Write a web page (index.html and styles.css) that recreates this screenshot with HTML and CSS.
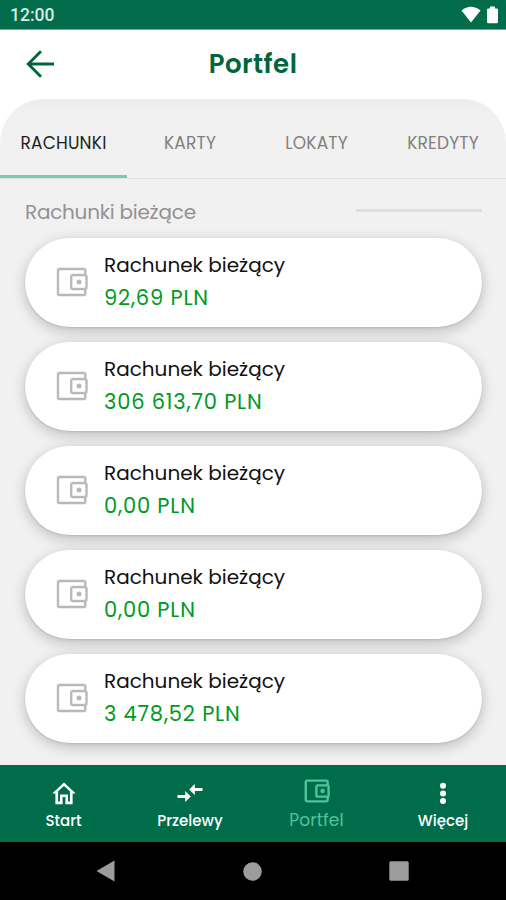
FILE: index.html
```html
<!DOCTYPE html>
<html lang="pl">
<head>
    <meta charset="UTF-8">
    <meta name="viewport" content="width=device-width, initial-scale=1.0">
    <title>Portfel</title>
    <link rel="stylesheet" href="styles.css">
</head>
<body>

    <svg class="sprite" aria-hidden="true">
        <symbol id="wallet" viewBox="0 0 32 30">
            <path d="M29.3 7.5V3.6Q29.3 2 27.7 2H3.6Q2 2 2 3.6V26.4Q2 28 3.6 28H27.7Q29.3 28 29.3 26.4V22.5"/>
            <rect x="15.2" y="8" width="15.3" height="14" rx="1.8"/>
            <circle cx="23" cy="15" r="1.3"/>
        </symbol>
    </svg>

    <div class="phone">
        <div class="status-bar">
            <span class="clock">12:00</span>
            <div class="status-icons">
                <svg width="20" height="18" viewBox="0 0 20 18"><path d="M0.5 4.5Q10 -3 19.5 4.5L10 16.5Z"/></svg>
                <svg width="11" height="18" viewBox="0 0 11 18"><path d="M3 0.5H8V2.5H9.8Q11 2.5 11 3.7V16Q11 17.2 9.8 17.2H1.2Q0 17.2 0 16V3.7Q0 2.5 1.2 2.5H3Z"/></svg>
            </div>
        </div>

        <header class="header">
            <svg class="back" viewBox="0 0 28 28"><path d="M28 14H2M15 1.2L2.2 14L15 26.8"/></svg>
            <h1>Portfel</h1>
        </header>

        <main class="content">
            <nav class="tabs">
                <a class="tab active">RACHUNKI</a>
                <a class="tab">KARTY</a>
                <a class="tab">LOKATY</a>
                <a class="tab">KREDYTY</a>
            </nav>

            <div class="section-title">
                <h2>Rachunki bieżące</h2>
                <span class="line"></span>
            </div>

            <div class="accounts">
                <div class="account">
                    <svg class="wallet"><use href="#wallet"/></svg>
                    <div>
                        <p class="name">Rachunek bieżący</p>
                        <p class="amount">92,69 PLN</p>
                    </div>
                </div>
                <div class="account">
                    <svg class="wallet"><use href="#wallet"/></svg>
                    <div>
                        <p class="name">Rachunek bieżący</p>
                        <p class="amount">306 613,70 PLN</p>
                    </div>
                </div>
                <div class="account">
                    <svg class="wallet"><use href="#wallet"/></svg>
                    <div>
                        <p class="name">Rachunek bieżący</p>
                        <p class="amount">0,00 PLN</p>
                    </div>
                </div>
                <div class="account">
                    <svg class="wallet"><use href="#wallet"/></svg>
                    <div>
                        <p class="name">Rachunek bieżący</p>
                        <p class="amount">0,00 PLN</p>
                    </div>
                </div>
                <div class="account">
                    <svg class="wallet"><use href="#wallet"/></svg>
                    <div>
                        <p class="name">Rachunek bieżący</p>
                        <p class="amount">3 478,52 PLN</p>
                    </div>
                </div>
            </div>
        </main>

        <nav class="bottom-nav">
            <a class="nav-item">
                <svg width="24" height="23" viewBox="0 0 24 23"><path class="fill" fill-rule="evenodd" d="M12 0.6L0.2 11.6H3.4V22.2H10.6V15H13.4V22.2H20.6V11.6H23.8ZM12 4L17.9 9.3V19.6H16V12.6H8V19.6H6.1V9.3Z"/></svg>
                <span>Start</span>
            </a>
            <a class="nav-item">
                <svg width="26" height="23" viewBox="0 0 26 23"><path class="fill" d="M25.5 5.9H17.8V2.1L12.2 7.5L17.8 12.9V9.1H25.5ZM0.5 12.9H8.2V9.1L13.8 14.5L8.2 19.9V16.1H0.5Z"/></svg>
                <span>Przelewy</span>
            </a>
            <a class="nav-item active">
                <svg class="wallet" width="26" height="24"><use href="#wallet"/></svg>
                <span>Portfel</span>
            </a>
            <a class="nav-item">
                <svg width="8" height="23" viewBox="0 0 8 23"><g class="fill"><circle cx="4" cy="3.8" r="3"/><circle cx="4" cy="11.4" r="3"/><circle cx="4" cy="19" r="3"/></g></svg>
                <span>Więcej</span>
            </a>
        </nav>

        <div class="system-bar">
            <svg width="19" height="22" viewBox="0 0 19 22"><path d="M18.5 0.5V21.5L0.5 11Z"/></svg>
            <svg width="19" height="19" viewBox="0 0 19 19"><circle cx="9.5" cy="9.5" r="9.3"/></svg>
            <svg width="20" height="20" viewBox="0 0 20 20"><rect x="0.3" y="0.3" width="19.4" height="19.4" rx="1.5"/></svg>
        </div>
    </div>

</body>
</html>
```

FILE: styles.css
```css
* {
    box-sizing: border-box;
}
body {
    margin: 0;
    font-family: Poppins, Inter, sans-serif;
    background-color: #fff;
}
h1, h2, p {
    margin: 0;
}
svg {
    display: block;
    flex-shrink: 0;
}
.sprite {
    display: none;
}
.phone {
    width: 506px;
    height: 900px;
    display: flex;
    flex-direction: column;
    overflow: hidden;
}
.status-bar {
    height: 30px;
    padding: 0 8px 0 10px;
    display: flex;
    justify-content: space-between;
    background-color: #006c4a;
    border-bottom: 1px solid #75a896;
}
.clock {
    font-family: Roboto, sans-serif;
    font-size: 17.5px;
    font-weight: 500;
    line-height: 31px;
    color: #d9e9e3;
}
.status-icons {
    display: flex;
    gap: 6px;
    padding-top: 6px;
    fill: #fff;
}
.header {
    height: 69px;
    padding-bottom: 2px;
    display: grid;
    grid-template-columns: 54px 1fr 54px;
    align-items: center;
    text-align: center;
}
.back {
    width: 28px;
    height: 28px;
    margin-left: 26px;
    fill: none;
    stroke: #00663a;
    stroke-width: 2.8;
}
.header h1 {
    font-size: 26px;
    font-weight: 600;
    line-height: 32px;
    letter-spacing: 0.5px;
    color: #00663a;
}
.content {
    flex: 1;
    min-height: 0;
    background: linear-gradient(#ececec, #f1f1f1 16px);
    border-radius: 44px 44px 0 0;
}
.tabs {
    height: 80px;
    display: grid;
    grid-template-columns: 127px 126px 127px 126px;
    border-bottom: 1px solid #e2e2e2;
}
.tab {
    padding-top: 33px;
    font-size: 17px;
    line-height: 22px;
    letter-spacing: 0.2px;
    text-align: center;
    color: #808080;
}
.tab.active {
    color: #1e1e1e;
    border-bottom: 3px solid #79ccb0;
}
.section-title {
    height: 59px;
    padding: 0 24px 0 25px;
    display: flex;
    justify-content: space-between;
    align-items: flex-start;
}
.section-title h2 {
    padding-top: 20px;
    font-size: 20px;
    font-weight: 400;
    line-height: 26px;
    letter-spacing: -0.25px;
    color: #929292;
}
.section-title .line {
    width: 126px;
    height: 3px;
    margin-top: 30px;
    background-color: #dedede;
}
.accounts {
    padding: 0 24px 0 25px;
    display: flex;
    flex-direction: column;
    gap: 15px;
}
.account {
    height: 89px;
    padding: 0 0 2px 31px;
    display: flex;
    align-items: center;
    gap: 16px;
    background-color: #fff;
    border-radius: 45px;
    box-shadow: 0 4px 14px rgba(0, 0, 0, 0.22), 0 1px 2px rgba(0, 0, 0, 0.1);
}
.wallet {
    fill: none;
    stroke: #b9b9b9;
    stroke-width: 2.4;
}
.account .wallet {
    width: 32px;
    height: 30px;
}
.name {
    font-size: 20px;
    line-height: 32px;
    color: #111;
}
.amount {
    font-size: 21px;
    line-height: 33px;
    letter-spacing: 0.8px;
    color: #009a23;
}
.bottom-nav {
    height: 77px;
    display: grid;
    grid-template-columns: 127px 126px 127px 126px;
    background-color: #006c4a;
}
.nav-item {
    padding-top: 17px;
    display: flex;
    flex-direction: column;
    align-items: center;
    gap: 6px;
    font-size: 15px;
    font-weight: 500;
    line-height: 20px;
    color: #fff;
}
.nav-item .fill {
    fill: currentColor;
}
.nav-item.active {
    padding-top: 14px;
    font-size: 17px;
    font-weight: 400;
    line-height: 22px;
    letter-spacing: 0.15px;
    color: #4fc49b;
}
.nav-item .wallet {
    stroke: #4fc49b;
    stroke-width: 3;
}
.system-bar {
    height: 58px;
    padding: 0 97px 0 96px;
    display: flex;
    justify-content: space-between;
    align-items: center;
    background-color: #000;
    fill: #9c9c9c;
}
```
